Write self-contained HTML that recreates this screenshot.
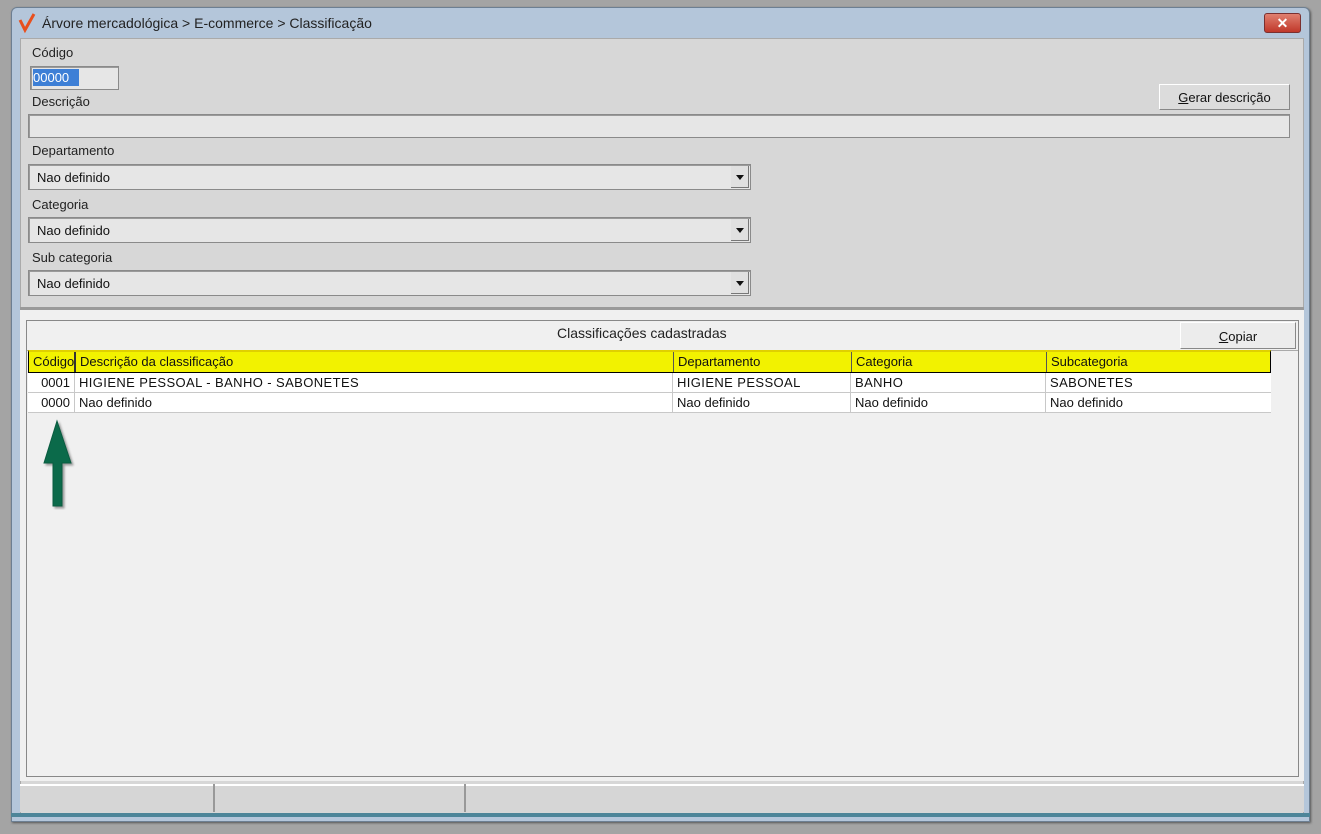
<!DOCTYPE html>
<html><head><meta charset="utf-8"><style>
*{box-sizing:border-box;margin:0;padding:0}
body{width:1321px;height:834px;background:#a4a4a4;font-family:"Liberation Sans",sans-serif;font-size:13px;color:#111;position:relative;overflow:hidden}
.a{position:absolute}
.win{left:11px;top:7px;width:1299px;height:815px;background:#b4c6da;border:1px solid #6d7f92;border-radius:6px 6px 0 0;box-shadow:1px 1px 2px #555}
.title{left:42px;top:15px;font-size:14px;color:#222}
.inp{background:#e6e6e6;border:1px solid #8a8a8a;box-shadow:inset 1px 1px 0 #9a9a9a}
.btn{background:#e4e4e4;border:1px solid #fff;border-right-color:#888;border-bottom-color:#888;text-align:center;font-size:13px;line-height:22px}
.lbl{font-size:13px;color:#222}
.arr{width:18px;height:22px;right:1px;top:1px;background:#e0e0e0;border-right:1px solid #777;border-bottom:1px solid #777}
.arr:after{content:"";position:absolute;left:5px;top:9px;border-left:4px solid transparent;border-right:4px solid transparent;border-top:5px solid #111}
.cell{position:absolute;height:100%;border-right:1px solid #c8c8c8;padding:0 4px;white-space:nowrap;line-height:19px}
.row{position:absolute;left:28px;width:1243px;height:20px;background:#fff;border-bottom:1px solid #c8c8c8}
</style></head><body>
<div class="a win"></div>
<svg class="a" style="left:18px;top:12px" width="20" height="22"><path d="M2 8 L7 18 L16 2" stroke="#e8501e" stroke-width="3" fill="none"/></svg>
<div class="a title">Árvore mercadológica &gt; E-commerce &gt; Classificação</div>
<div class="a" style="left:1264px;top:13px;width:37px;height:20px;background:linear-gradient(#e08070,#c0382a);border:1px solid #7a3030;border-radius:3px;color:#fff;text-align:center;font-size:14px;line-height:18px;font-weight:bold">✕</div>
<div class="a" style="left:20px;top:38px;width:1284px;height:776px;background:#d7d7d7;border:1px solid #aaa"></div>
<div class="a lbl" style="left:32px;top:45px">Código</div>
<div class="a inp" style="left:30px;top:66px;width:89px;height:24px"></div>
<div class="a" style="left:33px;top:69px;width:46px;height:17px;background:#3d7fd6;color:#fff;font-size:13px;line-height:17px">00000</div>
<div class="a lbl" style="left:32px;top:94px">Descrição</div>
<div class="a btn" style="left:1159px;top:84px;width:131px;height:26px;line-height:26px;background:#dcdcdc"><u>G</u>erar descrição</div>
<div class="a inp" style="left:28px;top:114px;width:1262px;height:24px"></div>
<div class="a lbl" style="left:32px;top:143px">Departamento</div>
<div class="a inp" style="left:28px;top:164px;width:723px;height:26px"><div class="a" style="left:8px;top:5px">Nao definido</div><div class="a arr"></div></div>
<div class="a lbl" style="left:32px;top:197px">Categoria</div>
<div class="a inp" style="left:28px;top:217px;width:723px;height:26px"><div class="a" style="left:8px;top:5px">Nao definido</div><div class="a arr"></div></div>
<div class="a lbl" style="left:32px;top:250px">Sub categoria</div>
<div class="a inp" style="left:28px;top:270px;width:723px;height:26px"><div class="a" style="left:8px;top:5px">Nao definido</div><div class="a arr"></div></div>
<div class="a" style="left:20px;top:307px;width:1284px;height:474px;background:#f0f0f0;border-top:3px solid #9a9a9a"></div>
<div class="a" style="left:26px;top:320px;width:1273px;height:457px;border:1px solid #888;background:#f0f0f0"></div>
<div class="a" style="left:27px;top:321px;width:1271px;height:30px;border-bottom:1px solid #aaa"></div>
<div class="a" style="left:557px;top:325px;font-size:14px;color:#222">Classificações cadastradas</div>
<div class="a btn" style="left:1180px;top:322px;width:116px;height:27px;line-height:27px;background:#ececec"><u>C</u>opiar</div>
<div class="a" style="left:28px;top:350px;width:1243px;height:23px;background:#f2f200;border:1px solid #000;border-top:2px solid #e0d000;font-size:13px">
<div class="cell" style="left:0;width:47px;border-right:2px solid #333">Código</div>
<div class="cell" style="left:47px;width:598px;border-right-color:#555">Descrição da classificação</div>
<div class="cell" style="left:645px;width:178px;border-right-color:#555">Departamento</div>
<div class="cell" style="left:823px;width:195px;border-right-color:#555">Categoria</div>
<div class="cell" style="left:1018px;width:224px;border:none">Subcategoria</div></div>
<div class="row" style="top:373px">
<div class="cell" style="left:0;width:47px;text-align:right">0001</div>
<div class="cell" style="left:47px;width:598px;letter-spacing:0.4px">HIGIENE PESSOAL - BANHO - SABONETES</div>
<div class="cell" style="left:645px;width:178px;letter-spacing:0.4px">HIGIENE PESSOAL</div>
<div class="cell" style="left:823px;width:195px;letter-spacing:0.4px">BANHO</div>
<div class="cell" style="left:1018px;width:224px;border:none;letter-spacing:0.4px">SABONETES</div></div>
<div class="row" style="top:393px">
<div class="cell" style="left:0;width:47px;text-align:right">0000</div>
<div class="cell" style="left:47px;width:598px">Nao definido</div>
<div class="cell" style="left:645px;width:178px">Nao definido</div>
<div class="cell" style="left:823px;width:195px">Nao definido</div>
<div class="cell" style="left:1018px;width:224px;border:none">Nao definido</div></div>
<svg class="a" style="left:40px;top:418px" width="36" height="92"><path d="M17 3 L31 45 L22 45 L22 88 L13 88 L13 45 L4 45 Z" fill="#0b6a4a" stroke="#0a5c40" stroke-width="1" style="filter:drop-shadow(2px 2px 1px #999)"/></svg>
<div class="a" style="left:20px;top:784px;width:1284px;height:28px;background:#d6d6d6;border-top:2px solid #fff"></div>
<div class="a" style="left:213px;top:784px;width:2px;height:28px;background:#999"></div>
<div class="a" style="left:464px;top:784px;width:2px;height:28px;background:#999"></div>
<div class="a" style="left:11px;top:813px;width:1299px;height:4px;background:#4d8599"></div>
</body></html>
